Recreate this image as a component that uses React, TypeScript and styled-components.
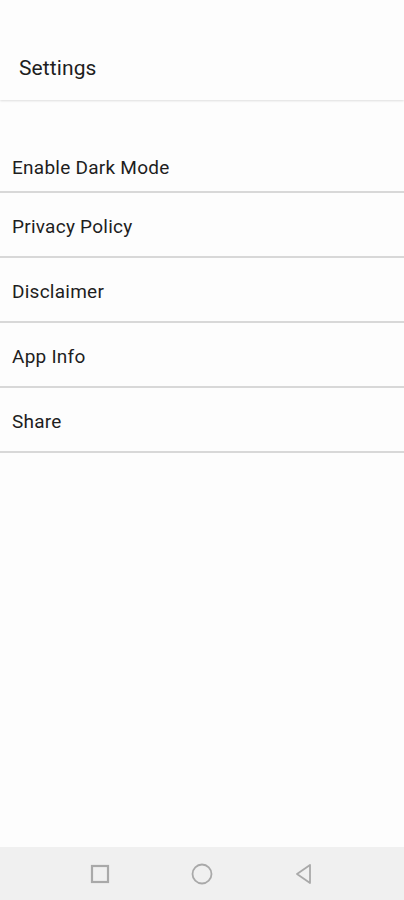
import React from 'react';
import styled, { createGlobalStyle } from 'styled-components';

const GlobalStyle = createGlobalStyle`
  html, body {
    margin: 0;
    padding: 0;
    background: #fdfdfd;
  }
  * {
    box-sizing: border-box;
  }
`;

const items = ['Enable Dark Mode', 'Privacy Policy', 'Disclaimer', 'App Info', 'Share'];

const Settings = () => {
  return (
    <Screen>
      <GlobalStyle />
      <Header>
        <Title>Settings</Title>
      </Header>
      <List>
        {items.map((label) => (
          <Row key={label}>
            <RowLabel>{label}</RowLabel>
          </Row>
        ))}
      </List>
      <NavBar>
        <NavButton aria-label="recents">
          <svg width="20" height="20" viewBox="0 0 20 20">
            <rect x="2" y="2" width="16" height="16" fill="none" stroke="#a9a9a9" strokeWidth="2.2" />
          </svg>
        </NavButton>
        <NavButton aria-label="home">
          <svg width="22" height="22" viewBox="0 0 22 22">
            <circle cx="11" cy="11" r="9.5" fill="none" stroke="#a9a9a9" strokeWidth="1.8" />
          </svg>
        </NavButton>
        <NavButton aria-label="back">
          <svg width="20" height="22" viewBox="0 0 20 22">
            <path d="M16 2 L3 11 L16 20 Z" fill="none" stroke="#a9a9a9" strokeWidth="1.8" strokeLinejoin="round" />
          </svg>
        </NavButton>
      </NavBar>
    </Screen>
  );
};

const Screen = styled.div`
  display: flex;
  flex-direction: column;
  width: 404px;
  height: 900px;
  background: #fdfdfd;
  font-family: Roboto, 'Noto Sans', sans-serif;
  color: #1e1e1e;
`;

const Header = styled.header`
  display: flex;
  align-items: center;
  height: 100px;
  padding: 36px 19px 0;
  background: #fdfdfd;
  box-shadow: 0 1px 2px rgba(0, 0, 0, 0.12);
  position: relative;
  z-index: 1;
`;

const Title = styled.h1`
  margin: 0;
  font-size: 21px;
  font-weight: 400;
  letter-spacing: 0.1px;
`;

const List = styled.ul`
  list-style: none;
  margin: 0;
  padding: 29px 0 0;
  flex: 1;
`;

const Row = styled.li`
  display: flex;
  align-items: center;
  height: 65px;
  padding: 4px 12px 0;
  border-bottom: 2px solid #d8d8d8;

  &:first-child {
    height: 64px;
    padding-top: 15px;
  }
`;

const RowLabel = styled.span`
  font-size: 19px;
  font-weight: 400;
  letter-spacing: 0.25px;
`;

const NavBar = styled.nav`
  display: flex;
  align-items: center;
  justify-content: center;
  gap: 80px;
  height: 53px;
  background: #f0f0f0;
`;

const NavButton = styled.div`
  display: flex;
  align-items: center;
  justify-content: center;
  width: 22px;
  height: 22px;
`;

export default Settings;
